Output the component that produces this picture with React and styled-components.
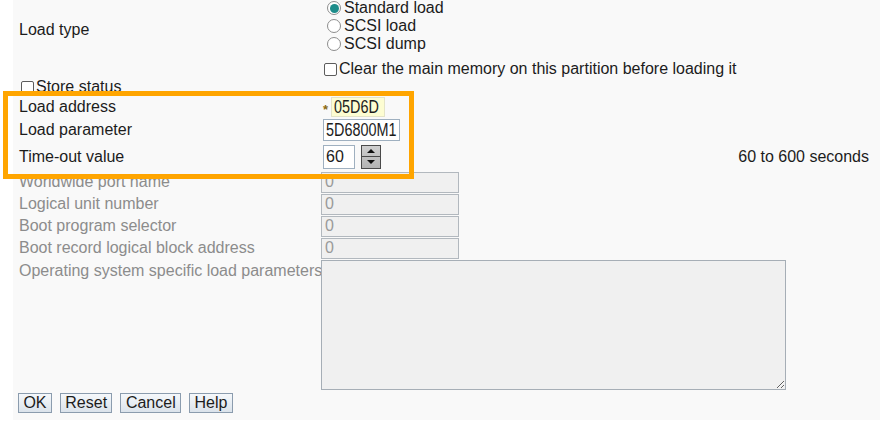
import styled, { createGlobalStyle } from "styled-components";

const GlobalStyle = createGlobalStyle`
  html, body {
    margin: 0;
    padding: 0;
    background: #ffffff;
    font-family: "Liberation Sans", Arial, sans-serif;
    overflow: hidden;
  }
`;

const Page = styled.div`
  position: relative;
  width: 880px;
  height: 421px;
  overflow: hidden;
  padding-left: 13px;
  box-sizing: border-box;
`;

const Panel = styled.div`
  height: 100%;
  background: #f9f9f9;
  padding: 0 11px 0 6px;
  box-sizing: border-box;
  font-size: 16px;
  line-height: 18px;
  color: #1c1c1c;
`;

const Form = styled.div`
  display: flex;
  flex-direction: column;
  margin-top: -1px;
`;

const Row = styled.div`
  display: grid;
  grid-template-columns: 302px 1fr;
  align-items: center;
  height: ${(p) => p.$h}px;
  margin-top: ${(p) => p.$mt || 0}px;
`;

const Label = styled.div`
  color: ${(p) => (p.$disabled ? "#8c8c8c" : "#1c1c1c")};
  white-space: nowrap;
  align-self: ${(p) => (p.$top ? "start" : "center")};
  padding-top: ${(p) => p.$pt || 0}px;
`;

const Field = styled.div`
  display: flex;
  align-items: center;
  align-self: stretch;
`;

const RadioGroup = styled.div`
  display: flex;
  flex-direction: column;
  padding-left: 6px;
`;

const RadioItem = styled.label`
  display: flex;
  align-items: center;
  height: 18px;
  gap: 3px;
`;

const Radio = styled.span`
  width: 12px;
  height: 12px;
  border-radius: 50%;
  border: 1px solid #8d8d8d;
  background: #fff;
  display: flex;
  align-items: center;
  justify-content: center;

  &::after {
    content: "";
    width: 9px;
    height: 9px;
    border-radius: 50%;
    background: ${(p) => (p.$checked ? "#1d8c8a" : "transparent")};
  }
`;

const CheckItem = styled.label`
  display: flex;
  align-items: center;
  gap: 2px;
  white-space: nowrap;
  padding-left: ${(p) => p.$indent || 0}px;
`;

const Box = styled.span`
  width: 11px;
  height: 11px;
  border: 1px solid #5c5c5c;
  border-radius: 2px;
  background: #fff;
`;

const Asterisk = styled.span`
  color: #8a6a10;
  font-size: 13px;
  line-height: 13px;
  font-weight: bold;
  width: 10px;
  padding-left: 2px;
  margin-top: 5px;
  box-sizing: border-box;
`;

/* read-only value shown in a narrow face, like the console's input font */
const ValueBox = styled.div`
  box-sizing: border-box;
  width: ${(p) => p.$w}px;
  height: ${(p) => p.$h}px;
  margin-left: ${(p) => p.$ml || 0}px;
  padding: 0 2px;
  display: flex;
  align-items: center;
  overflow: hidden;
  background: ${(p) => p.$bg || "#ffffff"};
  border: 1px solid ${(p) => p.$border || "#9fb0c0"};
`;

const NarrowText = styled.span`
  display: inline-block;
  font-size: 18px;
  line-height: 18px;
  color: #1c1c1c;
  white-space: nowrap;
  transform: scaleX(0.8);
  transform-origin: left center;
`;

const TextInput = styled.input`
  box-sizing: border-box;
  width: ${(p) => p.$w}px;
  height: ${(p) => p.$h || 22}px;
  margin: 0;
  margin-left: ${(p) => p.$ml || 0}px;
  padding: 0 2px;
  font-family: "Liberation Sans", Arial, sans-serif;
  font-size: 16px;
  color: #1c1c1c;
  background: #ffffff;
  border: 1px solid #9fb0c0;
  outline: none;
`;

const DisabledInput = styled.input`
  box-sizing: border-box;
  width: 138px;
  height: 21px;
  margin: 0;
  padding: 0 3px;
  font-family: "Liberation Sans", Arial, sans-serif;
  font-size: 16px;
  color: #9a9a9a;
  background: #f0f0f0;
  border: 1px solid #b2b8be;
  outline: none;
`;

const Spinner = styled.span`
  display: flex;
  flex-direction: column;
  width: 20px;
  height: 24px;
  margin-left: 6px;
  box-sizing: border-box;
  border: 1px solid #4a4a4a;
  background: linear-gradient(#cfcfcf, #b4b4b4);
`;

const SpinHalf = styled.span`
  flex: 1;
  display: flex;
  align-items: center;
  justify-content: center;
  border-top: ${(p) => (p.$down ? "1px solid #4a4a4a" : "none")};

  &::after {
    content: "";
    border-left: 4px solid transparent;
    border-right: 4px solid transparent;
    ${(p) =>
      p.$down ? "border-top: 4px solid #111;" : "border-bottom: 4px solid #111;"}
  }
`;

const Hint = styled.span`
  margin-left: auto;
  white-space: nowrap;
`;

const TextArea = styled.textarea`
  box-sizing: border-box;
  width: 465px;
  height: 130px;
  margin: 0;
  background: #f0f0f0;
  border: 1px solid #a6aeb6;
  resize: both;
  outline: none;
`;

const ButtonBar = styled.div`
  display: flex;
  gap: 8px;
  margin-top: 3px;
  margin-left: -1px;
`;

const Button = styled.button`
  height: 20px;
  padding: 0 4.4px;
  margin: 0;
  font-family: "Liberation Sans", Arial, sans-serif;
  font-size: 16px;
  line-height: 18px;
  color: #1c1c1c;
  background: linear-gradient(#f5f8fb, #dbe3eb);
  border: 1px solid #8b9cae;
  border-radius: 0;
`;

const Highlight = styled.div`
  position: absolute;
  left: 3px;
  top: 91px;
  width: 411px;
  height: 88px;
  box-sizing: border-box;
  border: 5px solid #ffa500;
  pointer-events: none;
`;

const disabledRows = [
  "Worldwide port name",
  "Logical unit number",
  "Boot program selector",
  "Boot record logical block address",
];

export default function App() {
  return (
    <>
      <GlobalStyle />
      <Page>
        <Panel>
          <Form>
            <Row $h={54}>
              <Label $top $pt={22}>
                Load type
              </Label>
              <RadioGroup>
                <RadioItem>
                  <Radio $checked />
                  Standard load
                </RadioItem>
                <RadioItem>
                  <Radio />
                  SCSI load
                </RadioItem>
                <RadioItem>
                  <Radio />
                  SCSI dump
                </RadioItem>
              </RadioGroup>
            </Row>
            <Row $h={18} $mt={7}>
              <span />
              <CheckItem $indent={3}>
                <Box />
                Clear the main memory on this partition before loading it
              </CheckItem>
            </Row>
            <Row $h={18}>
              <CheckItem $indent={2}>
                <Box />
                Store status
              </CheckItem>
            </Row>
            <Row $h={22}>
              <Label>Load address</Label>
              <Field>
                <Asterisk>*</Asterisk>
                <ValueBox $w={54} $h={20} $bg="#fdfdd2" $border="#e4e4c8">
                  <NarrowText>05D6D</NarrowText>
                </ValueBox>
              </Field>
            </Row>
            <Row $h={24}>
              <Label>Load parameter</Label>
              <Field>
                <ValueBox $w={77} $h={22} $ml={2}>
                  <NarrowText>5D6800M1</NarrowText>
                </ValueBox>
              </Field>
            </Row>
            <Row $h={29}>
              <Label>Time-out value</Label>
              <Field>
                <TextInput readOnly value="60" $w={32} $h={24} $ml={2} />
                <Spinner>
                  <SpinHalf />
                  <SpinHalf $down />
                </Spinner>
                <Hint>60 to 600 seconds</Hint>
              </Field>
            </Row>
            {disabledRows.map((label) => (
              <Row $h={22} key={label}>
                <Label $disabled>{label}</Label>
                <Field>
                  <DisabledInput readOnly value="0" />
                </Field>
              </Row>
            ))}
            <Row $h={131}>
              <Label $disabled $top $pt={3}>
                Operating system specific load parameters
              </Label>
              <Field>
                <TextArea readOnly />
              </Field>
            </Row>
            <ButtonBar>
              <Button>OK</Button>
              <Button>Reset</Button>
              <Button>Cancel</Button>
              <Button>Help</Button>
            </ButtonBar>
          </Form>
        </Panel>
        <Highlight />
      </Page>
    </>
  );
}
